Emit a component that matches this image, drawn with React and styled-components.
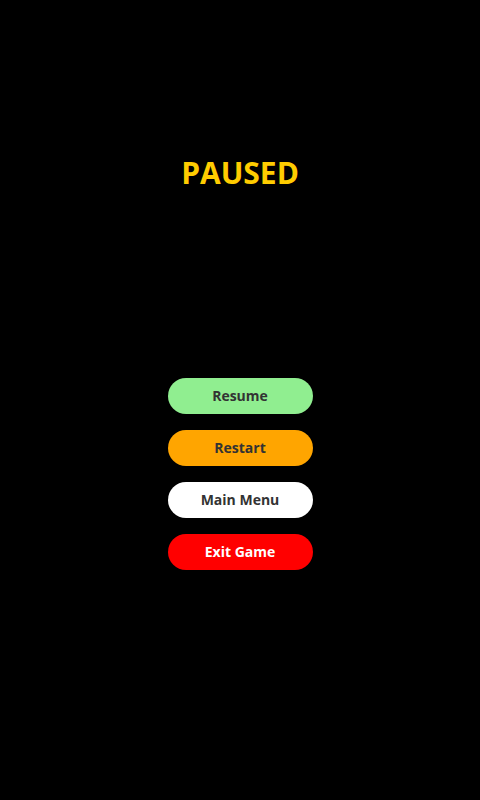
import React from 'react';
import styled, { createGlobalStyle } from 'styled-components';

const GlobalStyle = createGlobalStyle`
  html, body {
    margin: 0;
    padding: 0;
    background: #000000;
  }
  body {
    font-family: "Open Sans", "Noto Sans", sans-serif;
  }
`;

const Screen = styled.div`
  display: flex;
  flex-direction: column;
  align-items: center;
  min-height: 800px;
  padding-top: 152px;
  box-sizing: border-box;
  background: #000000;
`;

const Title = styled.h1`
  margin: 0;
  height: 42px;
  line-height: 42px;
  font-size: 30px;
  font-weight: 700;
  color: #ffcc00;
`;

const Menu = styled.div`
  display: flex;
  flex-direction: column;
  gap: 16px;
  margin-top: 184px;
`;

const MenuButton = styled.button`
  width: 145px;
  height: 36px;
  border: none;
  border-radius: 18px;
  background: ${(p) => p.$bg};
  color: ${(p) => p.$fg || '#333333'};
  font-family: "Open Sans", "Noto Sans", sans-serif;
  font-size: 14px;
  line-height: 34px;
  font-weight: 700;
  cursor: pointer;
  padding: 0;
`;

const items = [
  { label: 'Resume', bg: '#90ee90' },
  { label: 'Restart', bg: '#ffa500' },
  { label: 'Main Menu', bg: '#ffffff' },
  { label: 'Exit Game', bg: '#ff0000', fg: '#ffffff' },
];

export default function App() {
  return (
    <>
      <GlobalStyle />
      <Screen>
        <Title>PAUSED</Title>
        <Menu>
          {items.map((item) => (
            <MenuButton key={item.label} $bg={item.bg} $fg={item.fg}>
              {item.label}
            </MenuButton>
          ))}
        </Menu>
      </Screen>
    </>
  );
}
